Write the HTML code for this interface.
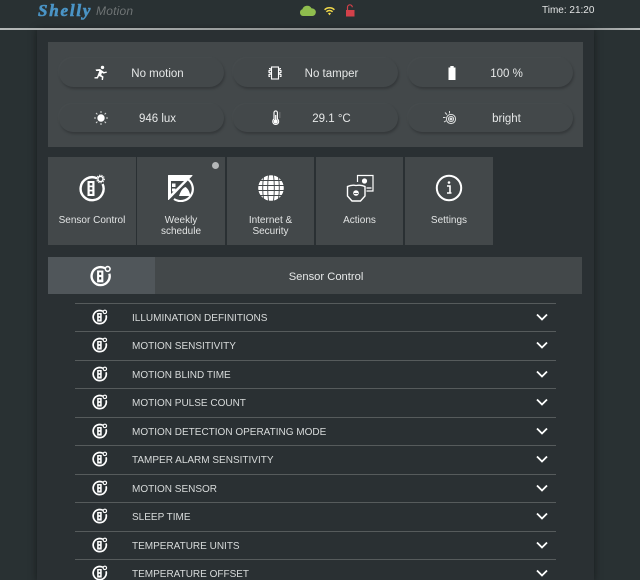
<!DOCTYPE html>
<html><head><meta charset="utf-8"><style>
*{box-sizing:border-box}
html,body{margin:0;padding:0;width:640px;height:580px;overflow:hidden}
body{background:#293133;font-family:"Liberation Sans",sans-serif;color:#e2e4e4}
#w{position:relative;width:640px;height:580px;overflow:hidden}
.a{position:absolute}
.page{left:37px;top:30px;width:557px;height:550px;background:#2a3033;box-shadow:0 0 6px 1px #1c2122}
.line{left:0;top:28px;width:640px;height:2px;background:linear-gradient(90deg,#b4b8b8,#8d9191 50%,#8d9191 90%,#b4b8b8)}
.panel{left:48px;top:42px;width:535px;height:105px;background:#43484a}
.pill{width:165px;height:29px;border-radius:15px;background:#43484a;box-shadow:1px 2px 2px #35393b,-1px -1px 1px #474c4e;font-size:11.5px;line-height:30px;color:#e6e8e8}
.pill span{position:absolute;left:44px;right:0;top:1px;text-align:center;padding-right:12px}
.pill svg{position:absolute;left:34px;top:7px}
.tile{top:157px;width:88px;height:88px;background:#43484a;font-size:10px;line-height:11px;text-align:center;color:#e2e4e4}
.tile svg{position:absolute;left:30px;top:17px}
.tile div{position:absolute;left:0;right:0;top:58px}
.row{left:75px;width:481px;height:29px;border-top:1px solid #565b5c;font-size:10px;color:#d8dbdb}
.row span{position:absolute;left:57px;top:0;line-height:29px}
.row.o span{line-height:30px}
.row svg.i{position:absolute;left:17px;top:5px}
.row svg.c{position:absolute;left:460px;top:8px}
</style></head><body><div id="w">
<svg width="0" height="0" style="position:absolute">
<symbol id="sc" viewBox="0 0 28 28">
<path d="M19 4.3A11.5 11.5 0 1 0 24.6 10" fill="none" stroke="#fff" stroke-width="2.4"/>
<rect x="9.5" y="7" width="7" height="15" fill="#fff"/>
<rect x="11.7" y="9" width="2.6" height="2.5" fill="#43484a"/><rect x="11.7" y="13.2" width="2.6" height="2.5" fill="#43484a"/><rect x="11.7" y="17.4" width="2.6" height="2.5" fill="#43484a"/>
<circle cx="22.5" cy="5" r="2.6" fill="none" stroke="#fff" stroke-width="1.5"/>
<circle cx="22.5" cy="5" r="3.9" fill="none" stroke="#fff" stroke-width="1" stroke-dasharray="1.2 1.2"/>
</symbol>
<symbol id="sl" viewBox="0 0 28 28">
<path d="M19 4A11.5 11.5 0 1 0 24.6 11" fill="none" stroke="#fff" stroke-width="3"/>
<rect x="9" y="7" width="8" height="15" fill="#fff"/>
<rect x="11.7" y="9.5" width="2.6" height="3" fill="#2a3033"/><rect x="11.7" y="15.5" width="2.6" height="3" fill="#2a3033"/>
<circle cx="22.5" cy="5" r="3" fill="none" stroke="#fff" stroke-width="2"/>
</symbol>
<symbol id="chev" viewBox="0 0 14 10"><path d="M2 2.5L7 7.5L12 2.5" fill="none" stroke="#fff" stroke-width="1.8"/></symbol>
</svg>

<div class="a page"></div>
<div class="a line"></div>

<div class="a" style="left:38px;top:2px;font:italic bold 17px 'Liberation Serif',serif;color:#4a94c6;letter-spacing:1.8px;line-height:18px;-webkit-text-stroke:.6px #4a94c6">Shelly</div>
<div class="a" style="left:96px;top:4px;font-size:12px;line-height:15px;color:#6f7475;letter-spacing:.2px;font-style:italic">Motion</div>

<svg class="a" style="left:299px;top:4px" width="18" height="13" viewBox="0 0 18 13"><path d="M4 12A3.5 3.5 0 0 1 3.4 5.2A5 5 0 0 1 12.6 4.4A3.8 3.8 0 0 1 13.5 12Z" fill="#8fbd4e"/></svg>
<svg class="a" style="left:324px;top:7px" width="11" height="9" viewBox="0 0 11 9"><path d="M.6 2.8A7 7 0 0 1 10.4 2.8M2.4 4.8A4.4 4.4 0 0 1 8.6 4.8" fill="none" stroke="#f0d84a" stroke-width="1.5"/><path d="M4 6.4L5.5 8.4L7 6.4A2.2 2.2 0 0 0 4 6.4Z" fill="#f0d84a"/></svg>
<svg class="a" style="left:345px;top:4px" width="11" height="13" viewBox="0 0 11 13"><rect x="1" y="6" width="8.5" height="6.5" fill="#d3414a"/><path d="M2.5 6V3.2A2.4 2.4 0 0 1 7.3 3.2" fill="none" stroke="#d3414a" stroke-width="1.2"/></svg>
<div class="a" style="left:542px;top:4px;font-size:10px;line-height:13px;color:#e2e4e4">Time: 21:20</div>

<div class="a panel"></div>
<div class="a pill" style="left:59px;top:58px"><svg width="16" height="16" viewBox="0 0 16 16" fill="#fff"><circle cx="9.5" cy="2.4" r="1.7"/><path d="M2.5 4.5L7 4L11 7L13.5 6.5L14 7.6L10.5 8.6L9 7.8L8.2 10L10.5 11.5L10 15L8.7 15L8.8 12.3L6 11L4.8 13.5L1.5 13.5L1.5 12.2L4 12L6.3 6L3.2 6Z"/></svg><span>No motion</span></div>
<div class="a pill" style="left:233px;top:58px"><svg width="16" height="16" viewBox="0 0 16 16" fill="none" stroke="#fff" stroke-width="1.1"><rect x="4.5" y="2" width="7" height="12"/><path d="M2 3.5H3.2V5.5H2V7.5H3.2V9.5H2V11.5H3.2M14 3.5H12.8V5.5H14V7.5H12.8V9.5H14V11.5H12.8"/></svg><span>No tamper</span></div>
<div class="a pill" style="left:408px;top:58px"><svg width="16" height="16" viewBox="0 0 16 16" fill="#fff" style="left:36px"><rect x="4.5" y="2.5" width="7" height="12.5"/><rect x="6.3" y="1" width="3.4" height="2"/></svg><span>100 %</span></div>
<div class="a pill" style="left:59px;top:104px;height:28px;line-height:28px"><svg width="16" height="16" viewBox="0 0 16 16" style="top:6px"><circle cx="8" cy="8" r="3.7" fill="#fff"/><path d="M8 1V3M8 13V15M1 8H3M13 8H15M3 3L4.4 4.4M11.6 11.6L13 13M3 13L4.4 11.6M11.6 4.4L13 3" stroke="#d5d7d7" stroke-width="1"/></svg><span>946 lux</span></div>
<div class="a pill" style="left:233px;top:104px;height:28px;line-height:28px"><svg width="16" height="16" viewBox="0 0 16 16" fill="none" stroke="#fff" stroke-width="1.1" style="left:35px;top:6px"><path d="M6 2.6A1.7 1.7 0 0 1 9.4 2.6V9A3 3 0 1 1 6 9Z"/><circle cx="7.7" cy="11.5" r="1.5" fill="#fff"/><path d="M7.7 5V11" stroke-width="1.2"/><path d="M11 3H12.5M11 5H12.5M11 7H12.5" stroke="#999" stroke-width=".8"/></svg><span>29.1 °C</span></div>
<div class="a pill" style="left:408px;top:104px;height:28px;line-height:28px"><svg width="16" height="16" viewBox="0 0 16 16" fill="none" stroke="#dcdede" stroke-width="1" style="top:6px"><circle cx="9" cy="9" r="4.6"/><circle cx="9" cy="9" r="2.6"/><circle cx="9" cy="9" r="1" fill="#dcdede"/><path d="M1 7.5H3.5M3 2.5L5 4.6M7.5 1V3.4M2 12L4 10.8"/></svg><span>bright</span></div>

<div class="a tile" style="left:48px;width:88px"><svg width="28" height="28"><use href="#sc"/></svg><div>Sensor Control</div></div>
<div class="a tile" style="left:137px;width:88px"><svg width="28" height="28" viewBox="0 0 28 28"><path d="M1.5 1.5H25L1.5 25.5Z" fill="#fff" stroke="#fff" stroke-linejoin="round"/><path d="M4 7H17L4 20Z" fill="#43484a"/><rect x="5" y="9.5" width="3.5" height="3.5" fill="#fff"/><rect x="5" y="14.5" width="3.5" height="3" fill="#fff"/><path d="M20.5 5A11 11 0 0 1 7 25" fill="none" stroke="#fff" stroke-width="2.2"/><path d="M12 22C14 16 16 14 18.5 13C21.5 15 22.5 18 23.5 22Z" fill="#fff"/></svg><div>Weekly<br>schedule</div></div>
<div class="a" style="left:212px;top:162px;width:7px;height:7px;border-radius:50%;background:#b4b7b8"></div>
<div class="a tile" style="left:227px;width:87px"><svg width="28" height="28" viewBox="0 0 28 28" fill="none"><circle cx="14" cy="14" r="12.8" fill="#fff"/><path d="M3 6.5H25M1 11.5H27M1 16.5H27M3 21.5H25M6.5 3C5.5 10 5.5 18 6.5 25M11.5 1C10.5 9 10.5 19 11.5 27M16.5 1C17.5 9 17.5 19 16.5 27M21.5 3C22.5 10 22.5 18 21.5 25" stroke="#43484a" stroke-width=".9"/></svg><div>Internet &amp;<br>Security</div></div>
<div class="a tile" style="left:316px;width:87px"><svg width="28" height="28" viewBox="0 0 28 28" fill="none" stroke="#fff" stroke-width="1.2"><path d="M11.5 8V1.5H27V17H20.5"/><circle cx="18.5" cy="7" r="2.6" fill="#fff" stroke="none"/><path d="M20.5 14H25.5" stroke-width="1.3"/><path d="M1.5 12.5Q6 10.5 10 11.5Q15 10.5 19 12.5V22L14.5 27H6L1.5 22Z" stroke-width="1.4"/><circle cx="10" cy="19" r="2.8" fill="#fff" stroke="none"/><path d="M8 19.5H12" stroke="#43484a" stroke-width=".8"/></svg><div>Actions</div></div>
<div class="a tile" style="left:405px"><svg width="28" height="28" viewBox="0 0 28 28" fill="none"><circle cx="14" cy="14" r="12.2" stroke="#fff" stroke-width="2"/><circle cx="14" cy="8.5" r="1.3" fill="#fff"/><path d="M12 12H15V18.5M12 19H16.5" stroke="#fff" stroke-width="1.6"/></svg><div>Settings</div></div>

<div class="a" style="left:48px;top:257px;width:534px;height:37px;background:#43484a;font-size:11.2px;line-height:40px;text-align:center;padding-left:22px;color:#e6e8e8">Sensor Control</div>
<div class="a" style="left:48px;top:257px;width:107px;height:37px;background:#50565a"></div>
<svg class="a" style="left:90px;top:265px" width="22" height="22"><use href="#sl"/></svg>

<div class="a row o" style="top:303px"><svg class="i" width="16" height="16"><use href="#sl"/></svg><span>ILLUMINATION DEFINITIONS</span><svg class="c" width="14" height="10"><use href="#chev"/></svg></div>
<div class="a row" style="top:331px"><svg class="i" width="16" height="16"><use href="#sl"/></svg><span>MOTION SENSITIVITY</span><svg class="c" width="14" height="10"><use href="#chev"/></svg></div>
<div class="a row o" style="top:360px"><svg class="i" width="16" height="16"><use href="#sl"/></svg><span>MOTION BLIND TIME</span><svg class="c" width="14" height="10"><use href="#chev"/></svg></div>
<div class="a row" style="top:388px"><svg class="i" width="16" height="16"><use href="#sl"/></svg><span>MOTION PULSE COUNT</span><svg class="c" width="14" height="10"><use href="#chev"/></svg></div>
<div class="a row o" style="top:417px"><svg class="i" width="16" height="16"><use href="#sl"/></svg><span>MOTION DETECTION OPERATING MODE</span><svg class="c" width="14" height="10"><use href="#chev"/></svg></div>
<div class="a row" style="top:445px"><svg class="i" width="16" height="16"><use href="#sl"/></svg><span>TAMPER ALARM SENSITIVITY</span><svg class="c" width="14" height="10"><use href="#chev"/></svg></div>
<div class="a row o" style="top:474px"><svg class="i" width="16" height="16"><use href="#sl"/></svg><span>MOTION SENSOR</span><svg class="c" width="14" height="10"><use href="#chev"/></svg></div>
<div class="a row" style="top:502px"><svg class="i" width="16" height="16"><use href="#sl"/></svg><span>SLEEP TIME</span><svg class="c" width="14" height="10"><use href="#chev"/></svg></div>
<div class="a row o" style="top:531px"><svg class="i" width="16" height="16"><use href="#sl"/></svg><span>TEMPERATURE UNITS</span><svg class="c" width="14" height="10"><use href="#chev"/></svg></div>
<div class="a row" style="top:559px"><svg class="i" width="16" height="16"><use href="#sl"/></svg><span>TEMPERATURE OFFSET</span><svg class="c" width="14" height="10"><use href="#chev"/></svg></div>
</div></body></html>
